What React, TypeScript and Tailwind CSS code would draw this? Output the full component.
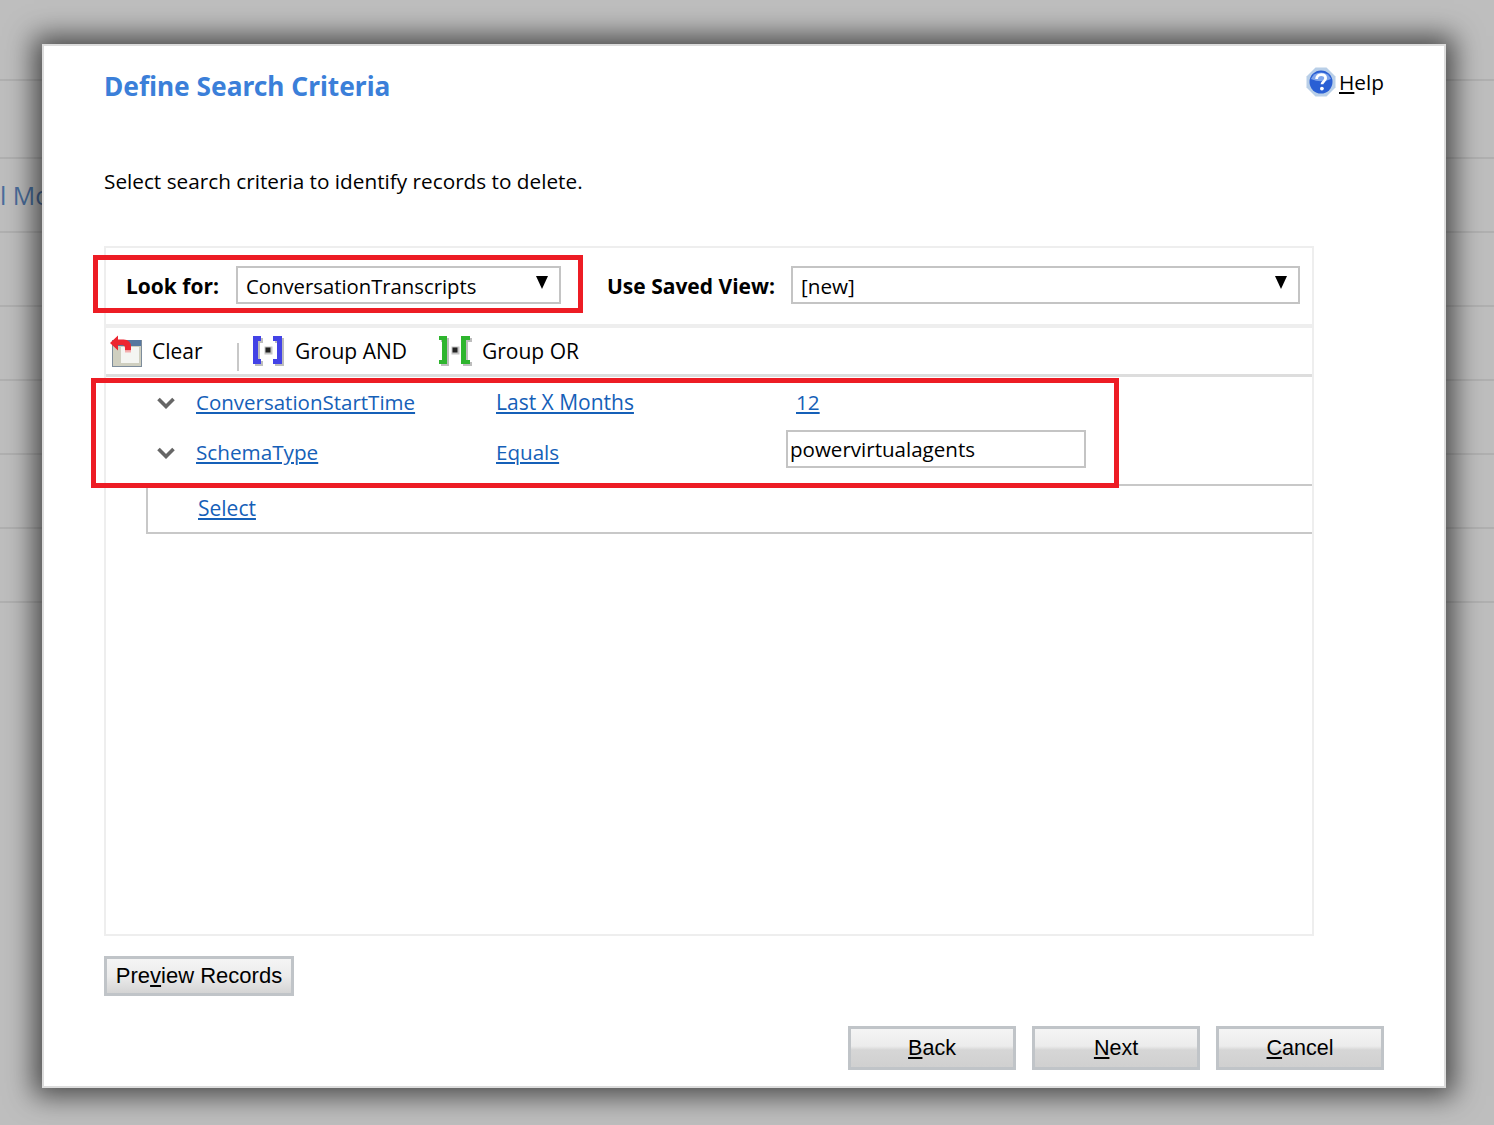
const bgRows = [81, 78, 74, 74, 74, 74, 74, 74];

const ui = { fontFamily: '"Open Sans", "Noto Sans", sans-serif' };

const HelpIcon = () => (
  <svg width="30" height="30" viewBox="0 0 30 30">
    <path d="M9.5 .5h11L29.5 9.5v11L20.5 29.5h-11L.5 20.5v-11z" fill="#b9cfe8" />
    <circle cx="15" cy="15" r="11.5" fill="#2a5fd4" />
    <path d="M5 12a10.5 9.5 0 0 1 20 0q-10 4.5-20 0z" fill="#7fa5ec" />
    <path d="M10.6 12c0-2.8 2-4.4 4.6-4.400s4.400 1.500 4.400 3.700c0 3.200-3.600 3.200-3.600 6" fill="none" stroke="#fff" strokeWidth="2.8" />
    <circle cx="15.9" cy="21.6" r="1.9" fill="#fff" />
  </svg>
);

const ClearIcon = () => (
  <svg width="34" height="34" viewBox="0 0 34 34">
    <rect x="3.5" y="6.5" width="29" height="26" fill="#cfcfc0" stroke="#7d8c9b" />
    <rect x="4" y="6" width="28" height="6" fill="#56779f" />
    <rect x="12" y="13" width="18" height="16" fill="#f4f5f2" />
    <path d="M1 9l8-7.500v4h5.500q7.500 0 7.500 7.500v3.500h-6v-2.500q0-3-3-3H9v5.500z" fill="#ec2530" />
    <rect x="16" y="16.500" width="6" height="2" fill="#f4b0b0" />
  </svg>
);

const andPath = "M1 2h8v5H6v18h3v5H1zM21 2h9v28h-9v-5h4V7h-4z";
const orPath = "M0 2h8v28H0v-4h3V6H0zM22 2h9v4h-4v20h4v4h-9z";

const GroupIcon = ({ color, or }: { color: string; or?: boolean }) => (
  <svg width="34" height="34" viewBox="0 0 34 34">
    <path d={or ? orPath : andPath} fill="#bdbdbd" transform="translate(2 2)" />
    <path d={or ? orPath : andPath} fill={color} />
    <rect x="12.5" y="12.5" width="8" height="8" fill="#c4c4c4" />
    <rect x="13.5" y="13.5" width="5" height="5" fill="#222" />
  </svg>
);

const Chevron = () => (
  <svg width="18" height="12" viewBox="0 0 18 12">
    <path d="M1.500 2l7.500 7.500L16.500 2" fill="none" stroke="#666" strokeWidth="3.6" />
  </svg>
);

const Arrow = () => (
  <svg width="14" height="13" viewBox="0 0 14 13">
    <path d="M1 0h12L7 13z" fill="#000" />
  </svg>
);

const Btn = ({ mid, post }: { mid: string; post: string }) => (
  <button className="w-[168px] h-[44px] border-[3px] border-[#c0c4c8] bg-[linear-gradient(#f4f4f4_0%,#ececec_45%,#d6d6d6_55%,#d0d0d0_100%)] text-[21.5px] text-black leading-none pt-[1px]" style={{ fontFamily: '"Liberation Sans", Arial, sans-serif' }}>
    <u>{mid}</u>{post}
  </button>
);

export default function App() {
  return (
    <div className="relative w-[1494px] h-[1125px] overflow-hidden bg-[#bebebe]" style={ui}>
      {/* page behind the dialog */}
      <div className="flex flex-col">
        {bgRows.map((h, i) => (
          <div key={i} style={{ height: h }} className="border-b-2 border-[#b0b0b0] box-border pl-[0px]">
            {i === 2 && <div className="pt-[20px] text-[25px] leading-[32px] text-[#4a6d9c] whitespace-pre">l Mo</div>}
          </div>
        ))}
      </div>

      {/* dialog */}
      <div className="absolute left-[42px] top-[44px] w-[1404px] h-[1044px] bg-white border-2 border-[#dcdcdc] shadow-[0_0_26px_8px_rgba(0,0,0,0.62)] pl-[60px] pr-[60px] flex flex-col">
        <div className="flex justify-between h-[74px]">
          <h1 className="mt-[21px] text-[26.300px] leading-[38px] font-bold text-[#3b7fd9] whitespace-nowrap" style={{ fontFamily: '"Noto Sans", sans-serif' }}>Define Search Criteria</h1>
          <div className="flex items-center gap-[3px] h-[30px] mt-[21px] text-[20.800px] text-black">
            <HelpIcon />
            <span className="mt-[1px]"><u>H</u>elp</span>
          </div>
        </div>
        <p className="mt-[45px] h-[32px] text-[20.750px] leading-[32px] text-black">Select search criteria to identify records to delete.</p>

        <div className="mt-[49px] w-[1210px] h-[690px] border-2 border-[#eeeeee] flex flex-col text-[21px] leading-[30px] text-black">
          <div className="h-[80px] border-b-4 border-[#eeeeee] flex items-center pl-[20px] pb-[2px]">
            <span className="font-bold w-[110px] mt-[1px]">Look for:</span>
            <div className="w-[325px] h-[38px] border-2 border-[#c4c4c4] flex items-center justify-between pl-[8px] pr-[10px]">
              <span className="text-[20.300px] mt-[1px]">ConversationTranscripts</span>
              <span className="-mt-[5px]"><Arrow /></span>
            </div>
            <span className="font-bold ml-[46px] w-[184px] mt-[1px]">Use Saved View:</span>
            <div className="w-[509px] h-[38px] border-2 border-[#c4c4c4] flex items-center justify-between pl-[8px] pr-[10px]">
              <span className="mt-[1px] text-[20.700px]">[new]</span>
              <span className="-mt-[5px]"><Arrow /></span>
            </div>
          </div>

          <div className="h-[49px] border-b-[3px] border-[#dddddd] flex items-center pl-[3px]">
            <ClearIcon />
            <span className="ml-[9px] w-[85px]">Clear</span>
            <div className="w-[2px] h-[28px] mt-[12px] bg-[#c8c8c8]" />
            <div className="ml-[13px]"><GroupIcon color="#4343e6" /></div>
            <span className="ml-[9px] w-[113px] whitespace-nowrap">Group AND</span>
            <div className="ml-[31px]"><GroupIcon color="#2eb52e" or /></div>
            <span className="ml-[9px]">Group OR</span>
          </div>

          <div className="h-[50px] flex items-center pl-[51px] text-[#1560b8]">
            <span className="mt-[1px]"><Chevron /></span>
            <a className="ml-[21px] w-[300px] underline text-[20.500px] -mt-[1px]">ConversationStartTime</a>
            <a className="w-[300px] underline -mt-[1px]">Last X Months</a>
            <a className="underline -mt-[1px] text-[20.700px]">12</a>
          </div>
          <div className="h-[57px] flex items-center pl-[51px] text-[#1560b8] pb-[13px]">
            <span className="mt-[7px]"><Chevron /></span>
            <a className="ml-[21px] w-[300px] underline mt-[6px] text-[20.700px]">SchemaType</a>
            <a className="w-[290px] underline mt-[6px] text-[20.600px]">Equals</a>
            <div className="w-[300px] h-[38px] border-2 border-[#c4c4c4] flex items-center pl-[2px] text-black text-[20.550px]">powervirtualagents</div>
          </div>
          <div className="ml-[40px] h-[50px] border-t-2 border-b-2 border-l-2 border-[#c8c8c8] flex items-center pl-[50px] pb-[3px] text-[#1560b8]">
            <a className="underline">Select</a>
          </div>
        </div>

        <div className="mt-[20px]">
          <button className="w-[190px] h-[40px] border-[3px] border-[#c0c4c8] bg-[linear-gradient(#f4f4f4_0%,#ececec_50%,#d4d4d4_100%)] text-[22px] leading-none text-black" style={{ fontFamily: '"Liberation Sans", Arial, sans-serif' }}>
            Pre<u>v</u>iew Records
          </button>
        </div>

        <div className="mt-[30px] flex justify-end gap-[16px]">
          <Btn mid="B" post="ack" />
          <Btn mid="N" post="ext" />
          <Btn mid="C" post="ancel" />
        </div>
      </div>

      {/* red annotation boxes */}
      <div className="absolute left-[93px] top-[255px] w-[490px] h-[58px] border-[5px] border-[#ed1c24]" />
      <div className="absolute left-[91px] top-[378px] w-[1028px] h-[110px] border-[5px] border-[#ed1c24]" />
    </div>
  );
}
